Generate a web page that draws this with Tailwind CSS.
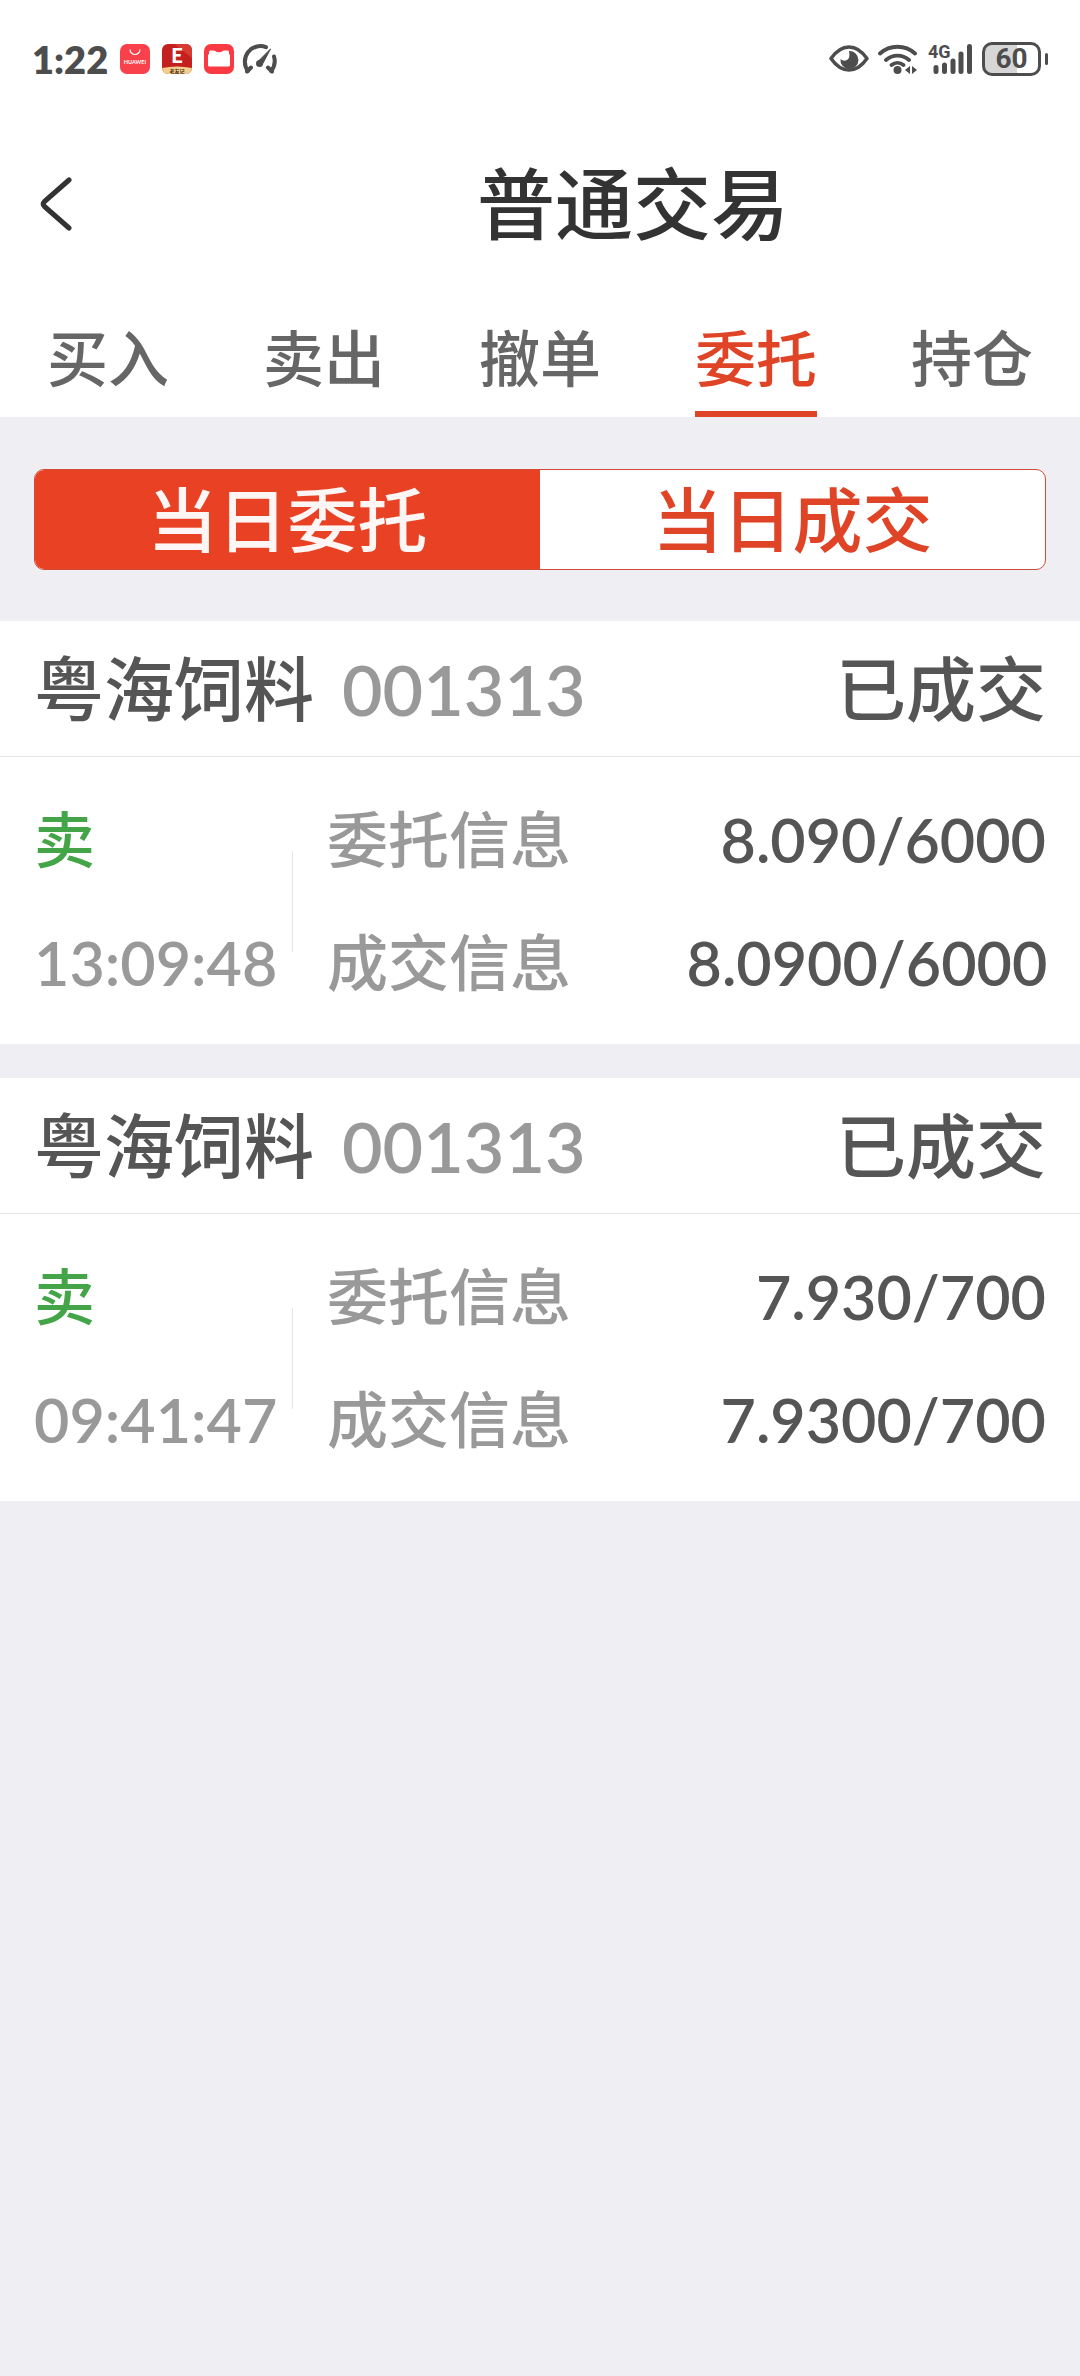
<!DOCTYPE html>
<html lang="zh-CN">
<head>
    <meta charset="utf-8"/>
    <meta name="viewport" content="width=device-width, initial-scale=1.0"/>
    <title>普通交易</title>
    <script src="https://cdn.jsdelivr.net/npm/@tailwindcss/browser@4"></script>
</head>
<body class="min-h-screen bg-[#efeef3] font-['Lato','Noto_Sans_CJK_SC',sans-serif] font-medium text-[#555555]">
    <div class="bg-white">
        <!-- status bar -->
        <div class="flex h-[118px] items-center justify-between px-8 text-[#4d4d4d]">
            <div class="flex items-center gap-3">
                <span class="text-[38px] leading-none font-extrabold">1:22</span>
                <svg class="size-[30px]" viewBox="0 0 30 30">
                    <rect width="30" height="30" rx="7" fill="#f9414b"/>
                    <path d="M10 5.500a5 5 0 0 0 10 0" fill="none" stroke="#fff" stroke-width="1.200"/>
                    <text x="15" y="19.500" text-anchor="middle" font-size="5.500" font-weight="700" fill="#fff">HUAWEI</text>
                </svg>
                <svg class="size-[30px]" viewBox="0 0 30 30">
                    <clipPath id="app-clip"><rect width="30" height="30" rx="6"/></clipPath>
                    <g clip-path="url(#app-clip)">
                        <rect width="30" height="30" fill="#c4201f"/>
                        <path d="M12 0h18v14z" fill="#d63a30"/>
                        <path d="M0 24q15-3 30 0v6H0z" fill="#f3cf8e"/>
                        <text x="15" y="19" text-anchor="middle" font-size="20" font-weight="900" fill="#fff">E</text>
                        <text x="15" y="28.500" text-anchor="middle" font-size="5" font-weight="700" fill="#4a2a12">老友记</text>
                    </g>
                </svg>
                <svg class="size-[30px]" viewBox="0 0 30 30">
                    <rect width="30" height="30" rx="7" fill="#f93a42"/>
                    <path d="M5 8q0-1.500 1.500-1.500h3q1.500 0 2 .8 1 1 3.500 1t3.500-1q.5-.8 2-.8h3Q25 6.500 25 8v2l1 1v10q0 1.500-1.500 1.500h-19Q4 22.500 4 21V11l1-1z" fill="#fff"/>
                </svg>
                <svg class="-ml-1 h-[30px] w-[35px]" viewBox="0 0 35 30" fill="none" stroke="currentColor" stroke-width="4" stroke-linecap="round">
                    <path d="M6 27A15.500 15.500 0 0 1 24 3.200"/>
                    <path d="M5 27.500l4-4M29 27A15.500 15.500 0 0 0 32 12.500M30 27.500l-4-4"/>
                    <path d="M15.500 18L28.500 5l-8.500 16z" fill="currentColor" stroke-width="1" stroke-linejoin="round"/>
                    <circle cx="17.500" cy="19.500" r="3.500" fill="currentColor" stroke="none"/>
                </svg>
            </div>
            <div class="flex items-center gap-[9px]">
                <svg class="h-[30px] w-10" viewBox="0 0 40 30">
                    <path d="M2 14.500Q10 3 20 3t18 11.500Q30 26 20 26T2 14.500z" fill="none" stroke="currentColor" stroke-width="3.500" stroke-linejoin="round"/>
                    <path d="M20 7a9 9 0 1 1-8.500 8q3 3 6.500 1t2-9z" fill="currentColor"/>
                </svg>
                <svg class="h-[30px] w-10" viewBox="0 0 40 30" fill="none" stroke="currentColor" stroke-width="3.800" stroke-linecap="round">
                    <path d="M2 9.500a26 26 0 0 1 35 0M8 16a17.500 17.500 0 0 1 23 0M13.500 21a9.500 9.500 0 0 1 12 0" />
                    <circle cx="19.500" cy="26" r="4" fill="currentColor" stroke="none"/>
                    <path d="M32 22v8l-5-4zM34 22v8l5-4z" fill="currentColor" stroke="none"/>
                </svg>
                <svg class="h-[30px] w-[46px] overflow-visible font-['Roboto',sans-serif]" viewBox="0 0 46 30">
                    <text x="1" y="14" font-size="18" font-weight="700" fill="currentColor">4G</text>
                    <path d="M9 23.500v4M17.500 21v6.500M26 17v10.500M34 10v17.500M42.500 2.500v25" fill="none" stroke="currentColor" stroke-width="5" stroke-linecap="round"/>
                </svg>
                <div class="flex items-center gap-1">
                    <span class="flex h-[34px] w-[59px] items-center justify-center rounded-[10px] border-3 border-current bg-linear-to-r from-[#d6d6d6] from-60% to-white to-60% font-['Roboto',sans-serif] text-[28px] leading-none font-bold">60</span>
                    <span class="h-3 w-[3px] rounded-full bg-current"></span>
                </div>
            </div>
        </div>

        <header class="flex h-[172px] items-center text-[#333333]">
            <button type="button" aria-label="返回" class="flex h-full w-[186px] items-center pl-10">
                <svg class="h-[54px] w-8" viewBox="0 0 32 54" fill="none" stroke="currentColor" stroke-width="5" stroke-linecap="round" stroke-linejoin="round">
                    <path d="M29 3L4.500 24.500Q2 27 4.500 29.500L29 51"/>
                </svg>
            </button>
            <h1 class="flex-1 text-center text-[78px] leading-none font-medium">普通交易</h1>
        </header>

        <nav class="grid h-[127px] grid-cols-5 text-[61px] leading-none text-[#666666]">
            <a href="#" class="flex justify-center"><span class="border-b-6 border-transparent pt-[38px]">买入</span></a>
            <a href="#" class="flex justify-center"><span class="border-b-6 border-transparent pt-[38px]">卖出</span></a>
            <a href="#" class="flex justify-center"><span class="border-b-6 border-transparent pt-[38px]">撤单</span></a>
            <a href="#" aria-current="page" class="flex justify-center text-[#e04427]"><span class="border-b-6 border-current pt-[38px]">委托</span></a>
            <a href="#" class="flex justify-center"><span class="border-b-6 border-transparent pt-[38px]">持仓</span></a>
        </nav>
    </div>

    <main>
        <div class="px-[34px] pt-[52px] pb-[51px]">
            <div class="grid h-[101px] grid-cols-2 overflow-hidden rounded-[10px] border border-[#cf4c37] bg-white text-[70px] leading-none text-[#e04427]">
                <button type="button" aria-pressed="true" class="bg-[#e84124] text-[#fdf6f5]">当日委托</button>
                <button type="button" aria-pressed="false">当日成交</button>
            </div>
        </div>

        <div class="flex flex-col gap-[34px]">
            <article class="bg-white">
                <div class="flex h-[136px] items-center border-b border-[#e5e5e5] px-[34px] text-[70px] leading-none">
                    <h2>粤海饲料</h2>
                    <span class="ml-7 font-semibold text-[#999999]">001313</span>
                    <span class="ml-auto">已成交</span>
                </div>
                <div class="flex items-center px-[34px] pt-[21px] pb-5 text-[61px] leading-[123px] text-[#999999]">
                    <div class="w-[258px] whitespace-nowrap">
                        <p class="text-[#43a547]">卖</p>
                        <time class="font-semibold">13:09:48</time>
                    </div>
                    <div class="h-[101px] w-px bg-[#e5e5e5]"></div>
                    <dl class="ml-[34px] grid flex-1 grid-cols-2">
                        <dt>委托信息</dt>
                        <dd class="text-right font-semibold text-[#555555]">8.090/6000</dd>
                        <dt>成交信息</dt>
                        <dd class="text-right font-semibold text-[#555555]">8.0900/6000</dd>
                    </dl>
                </div>
            </article>

            <article class="bg-white">
                <div class="flex h-[136px] items-center border-b border-[#e5e5e5] px-[34px] text-[70px] leading-none">
                    <h2>粤海饲料</h2>
                    <span class="ml-7 font-semibold text-[#999999]">001313</span>
                    <span class="ml-auto">已成交</span>
                </div>
                <div class="flex items-center px-[34px] pt-[21px] pb-5 text-[61px] leading-[123px] text-[#999999]">
                    <div class="w-[258px] whitespace-nowrap">
                        <p class="text-[#43a547]">卖</p>
                        <time class="font-semibold">09:41:47</time>
                    </div>
                    <div class="h-[101px] w-px bg-[#e5e5e5]"></div>
                    <dl class="ml-[34px] grid flex-1 grid-cols-2">
                        <dt>委托信息</dt>
                        <dd class="text-right font-semibold text-[#555555]">7.930/700</dd>
                        <dt>成交信息</dt>
                        <dd class="text-right font-semibold text-[#555555]">7.9300/700</dd>
                    </dl>
                </div>
            </article>
        </div>
    </main>
</body>
</html>
